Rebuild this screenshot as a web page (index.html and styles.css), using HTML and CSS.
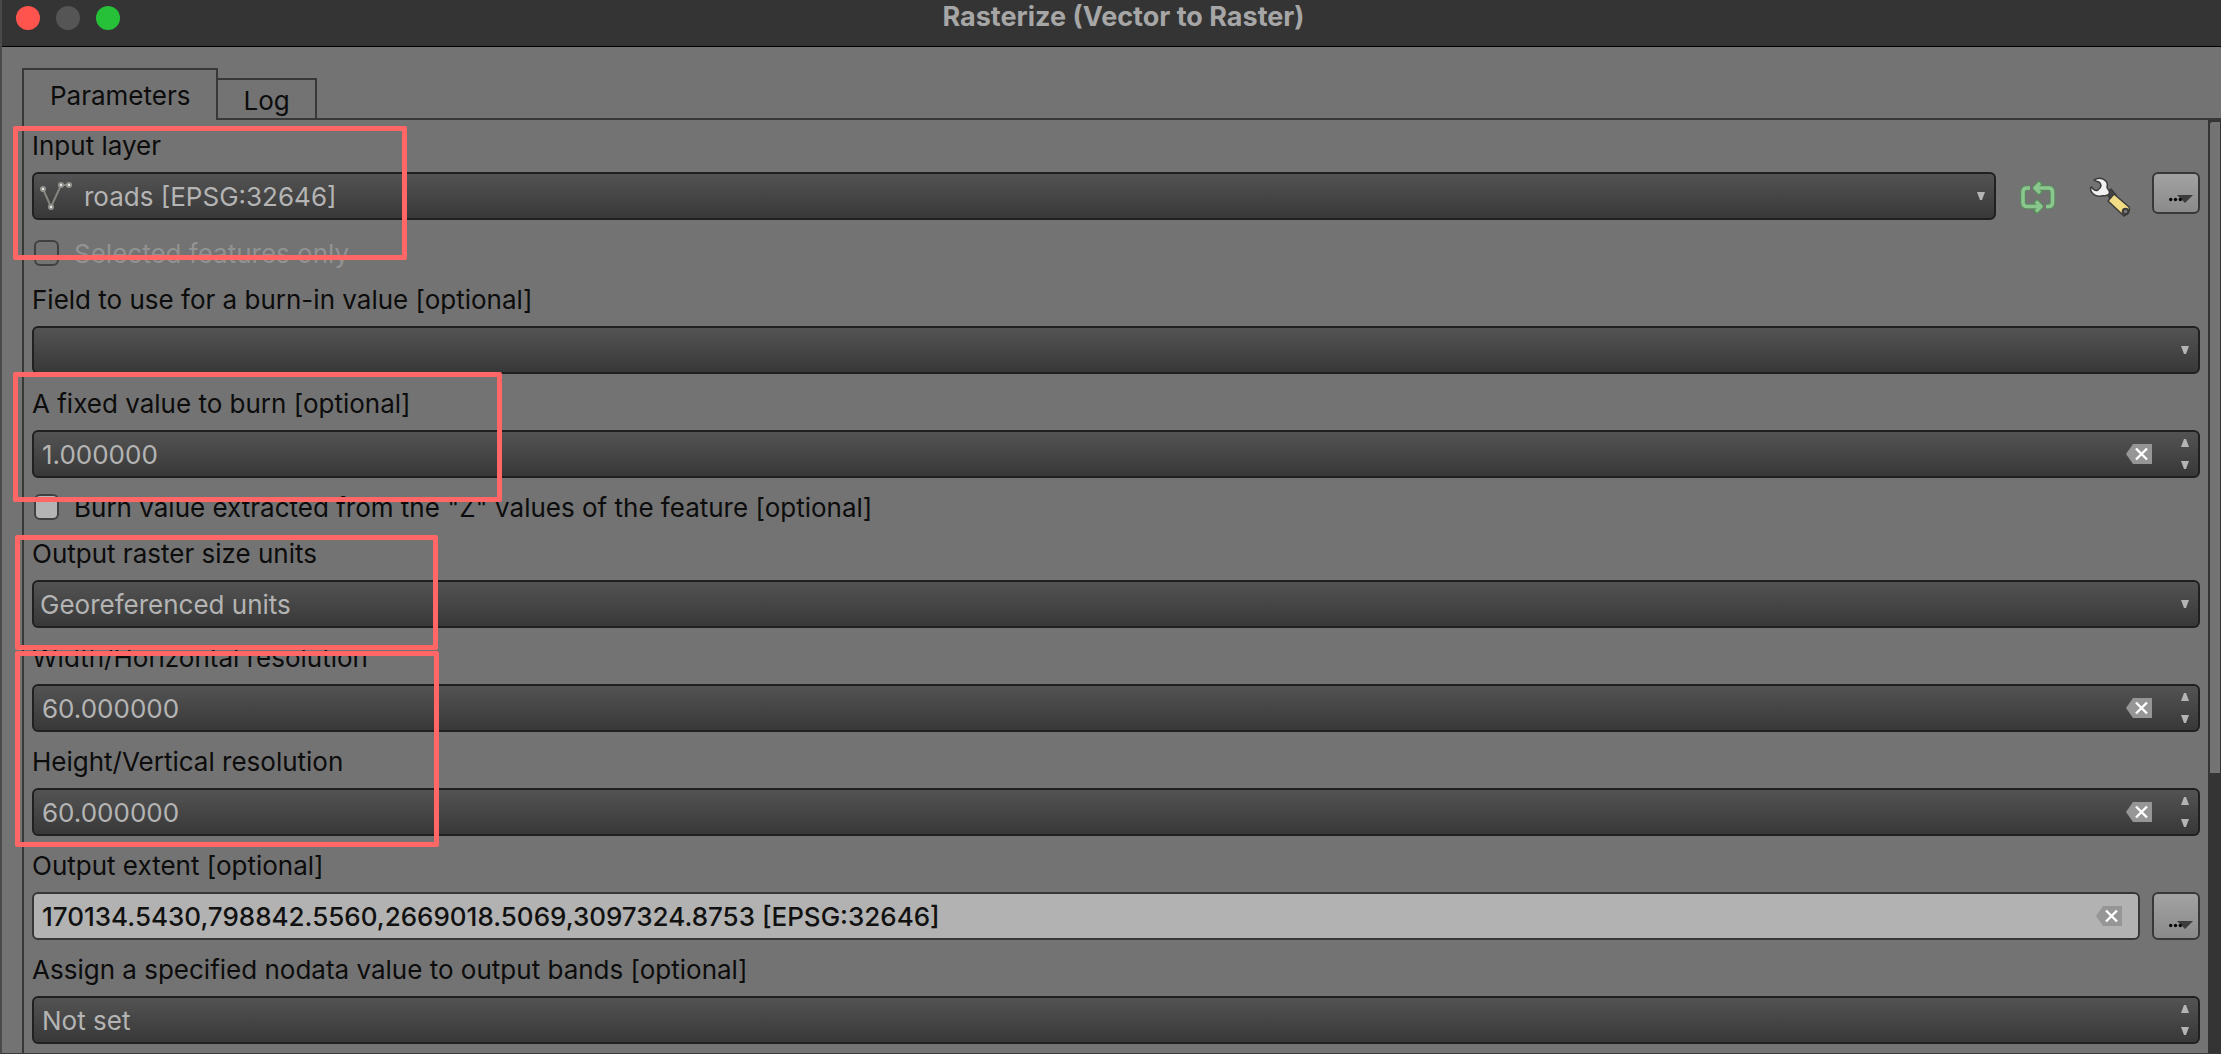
FILE: index.html
```html
<!DOCTYPE html>
<html lang="en">
<head>
<meta charset="utf-8">
<title>Rasterize (Vector to Raster)</title>
<link rel="stylesheet" href="styles.css">
</head>
<body>
<svg class="symbols" aria-hidden="true">
  <symbol id="up" viewBox="0 0 8 8"><path d="M3 0h2l3 8H0z" fill="#b4b4b4"/></symbol>
  <symbol id="down" viewBox="0 0 8 8"><path d="M0 0h8L5 8H3z" fill="#b4b4b4"/></symbol>
  <symbol id="clear" viewBox="0 0 26 20"><path d="M7 0h19v20H7L0 10z" fill="#969696"/><path d="M10 4.500l11 11M21 4.500l-11 11" stroke="#fff" stroke-width="2.400" fill="none"/></symbol>
  <symbol id="more" viewBox="0 0 24 10"><path d="M8 1h16l-8 8z" fill="#3c3c3c"/><circle cx="1.700" cy="5.500" r="1.700" fill="#080808"/><circle cx="6.500" cy="5.500" r="1.700" fill="#080808"/><circle cx="11.300" cy="5.500" r="1.700" fill="#080808"/></symbol>
</svg>
<main class="dialog">
  <header class="titlebar">
    <div class="lights">
      <button class="light close" aria-label="Close"></button>
      <button class="light minimize" aria-label="Minimize" disabled></button>
      <button class="light expand" aria-label="Zoom"></button>
    </div>
    <h1 class="title">Rasterize (Vector to Raster)</h1>
  </header>
  <div class="content">
    <div class="tabs" role="tablist">
      <button class="tab active" role="tab" aria-selected="true">Parameters</button>
      <button class="tab" role="tab" aria-selected="false">Log</button>
    </div>
    <div class="pane" role="tabpanel">
      <form class="form">
        <label class="label first" for="layer">Input layer</label>
        <div class="row">
          <div class="field combo">
            <svg class="layer-icon" viewBox="0 0 32 28" aria-hidden="true"><path d="M3 7l8 18L21 3h8" fill="none" stroke="#85857f" stroke-width="2"/><g fill="#fff" stroke="#94948e" stroke-width="2"><circle cx="3" cy="7" r="2"/><circle cx="11" cy="25" r="2"/><circle cx="21" cy="3" r="2"/><circle cx="29" cy="3" r="2"/></g></svg>
            <select class="control" id="layer"><option>roads [EPSG:32646]</option></select>
            <svg class="arrow"><use href="#down"/></svg>
          </div>
          <button class="tool" type="button" aria-label="Iterate over this layer">
            <svg width="40" height="36" viewBox="0 0 40 36" fill="none" stroke-linejoin="round"><path stroke="#4a9a50" stroke-opacity=".7" stroke-width="5.500" d="M12 9H9q-4 0-4 4v10.500q0 4 4 4h13M17 21.500l6 6-6 6M28 27.500h2.500q4 0 4-4V13q0-4-4-4H18M23 3l-6 6 6 6"/><path stroke="#8cc68f" stroke-width="3.500" d="M12 9H9q-4 0-4 4v10.500q0 4 4 4h13M18 22.500l5 5-5 5M28 27.500h2.500q4 0 4-4V13q0-4-4-4H18M22 4l-5 5 5 5"/></svg>
          </button>
          <button class="tool" type="button" aria-label="Advanced options">
            <svg width="42" height="40" viewBox="0 0 42 40" stroke="#3b3b3b" stroke-width="1.500" stroke-linejoin="round"><path d="M18 15l4-3 5 6-5 7z" fill="#444"/><path d="M5 3C11-1 20 3 18 10c0 3 4 3 2 7-2 3-5 1-8 2C6 20 0 15 2 10c2 1 3 5 7 3 3-2 4-4 2-7-1-2-4-1-6-3z" fill="#f1f2f0"/><path d="M25 17l15 13q2 5-5 9L19 24z" fill="#f3dc86"/><circle cx="36.500" cy="34.500" r="2.800" fill="#777" stroke-width="2"/></svg>
          </button>
          <button class="browse short" type="button" aria-label="Browse layers"><svg><use href="#more"/></svg></button>
        </div>
        <div class="check disabled"><input type="checkbox" id="selected" disabled><label for="selected">Selected features only</label></div>

        <label class="label" for="burnfield">Field to use for a burn-in value [optional]</label>
        <div class="field combo"><select class="control" id="burnfield"><option></option></select><svg class="arrow"><use href="#down"/></svg></div>

        <label class="label" for="fixed">A fixed value to burn [optional]</label>
        <div class="field">
          <input class="control" id="fixed" type="text" value="1.000000">
          <button class="clear" type="button" aria-label="Clear"><svg><use href="#clear"/></svg></button>
          <span class="steps"><button type="button" aria-label="Increase"><svg><use href="#up"/></svg></button><button type="button" aria-label="Decrease"><svg><use href="#down"/></svg></button></span>
        </div>
        <div class="check"><input type="checkbox" id="zvalues"><label for="zvalues">Burn value extracted from the "Z" values of the feature [optional]</label></div>

        <label class="label" for="units">Output raster size units</label>
        <div class="field combo"><select class="control" id="units"><option>Georeferenced units</option></select><svg class="arrow"><use href="#down"/></svg></div>

        <label class="label" for="width">Width/Horizontal resolution</label>
        <div class="field">
          <input class="control" id="width" type="text" value="60.000000">
          <button class="clear" type="button" aria-label="Clear"><svg><use href="#clear"/></svg></button>
          <span class="steps"><button type="button" aria-label="Increase"><svg><use href="#up"/></svg></button><button type="button" aria-label="Decrease"><svg><use href="#down"/></svg></button></span>
        </div>

        <label class="label" for="height">Height/Vertical resolution</label>
        <div class="field">
          <input class="control" id="height" type="text" value="60.000000">
          <button class="clear" type="button" aria-label="Clear"><svg><use href="#clear"/></svg></button>
          <span class="steps"><button type="button" aria-label="Increase"><svg><use href="#up"/></svg></button><button type="button" aria-label="Decrease"><svg><use href="#down"/></svg></button></span>
        </div>

        <label class="label" for="extent">Output extent [optional]</label>
        <div class="row">
          <div class="field light-field">
            <input class="control" id="extent" type="text" value="170134.5430,798842.5560,2669018.5069,3097324.8753 [EPSG:32646]">
            <button class="clear" type="button" aria-label="Clear"><svg><use href="#clear"/></svg></button>
          </div>
          <button class="browse" type="button" aria-label="Set extent"><svg><use href="#more"/></svg></button>
        </div>

        <label class="label" for="nodata">Assign a specified nodata value to output bands [optional]</label>
        <div class="field">
          <input class="control" id="nodata" type="text" value="Not set">
          <span class="steps"><button type="button" aria-label="Increase"><svg><use href="#up"/></svg></button><button type="button" aria-label="Decrease"><svg><use href="#down"/></svg></button></span>
        </div>
      </form>
      <div class="scrollbar"><div class="thumb"></div></div>
    </div>
  </div>
  <div class="mark mark-layer"></div>
  <div class="mark mark-value"></div>
  <div class="mark mark-units"></div>
  <div class="mark mark-resolution"></div>
</main>
</body>
</html>
```

FILE: styles.css
```css
* { box-sizing: border-box; }

body {
  margin: 0;
  background: #737373;
  color: #0c0c0c;
  font: 400 26px/32px Inter, "Liberation Sans", sans-serif;
}

button, input, select {
  margin: 0;
  padding: 0;
  border: 0;
  background: none;
  color: inherit;
  font: inherit;
}

svg { display: block; }
.symbols { position: absolute; width: 0; height: 0; }

.dialog {
  position: relative;
  display: flex;
  flex-direction: column;
  min-height: 100vh;
  border-left: 2px solid #4a4a4a;
  border-bottom: 1px solid #3a3a3a;
  overflow: hidden;
}

.titlebar {
  display: grid;
  grid-template-columns: 1fr auto 1fr;
  height: 47px;
  padding-left: 26px;
  margin-left: -2px;
  border-bottom: 1px solid #000;
  background: #343434;
}
.lights { display: flex; gap: 16px; margin-left: -10px; padding: 6px 0; }
.light { width: 24px; height: 24px; border-radius: 50%; }
.close { background: #ff544d; }
.minimize { background: #555; }
.expand { background: #26c138; }
.title {
  margin: 0;
  color: #a6a6a6;
  font-size: 27px;
  font-weight: 700;
  line-height: 34px;
}

.content {
  display: flex;
  flex: 1;
  flex-direction: column;
  padding: 21px 0 0 20px;
}
.tabs {
  display: flex;
  align-items: flex-end;
  box-shadow: inset 0 -2px #383838;
}
.tab {
  height: 42px;
  padding: 4px 25px 0;
  border: 2px solid #383838;
  border-left: 0;
}
.active {
  height: 52px;
  padding: 2px 26px 0;
  border-left: 2px solid #383838;
  border-bottom: 0;
  background: #737373;
}

.pane {
  display: flex;
  flex: 1;
  border-left: 2px solid #383838;
}
.form { flex: 1; min-width: 0; padding: 0 8px 9px; }
.label { display: block; padding: 6px 0 2px; line-height: 48px; }
.first { padding-top: 2px; }
.row { display: flex; align-items: flex-start; gap: 12px; }

.field {
  display: flex;
  flex: 1;
  align-items: center;
  min-width: 0;
  height: 48px;
  padding: 0 8px;
  border: 2px solid #202020;
  border-radius: 6px;
  background: linear-gradient(#535353, #383838);
  color: #b4b4b4;
}
.combo { padding-left: 6px; }
.combo .control { padding-top: 2px; }
.light-field {
  padding-right: 16px;
  border-color: #373737;
  background: #b2b2b2;
  color: #111;
  font-weight: 500;
}
.control {
  flex: 1;
  min-width: 0;
  height: 44px;
  appearance: none;
  outline: 0;
}
.layer-icon { width: 32px; height: 28px; margin-right: 12px; }
.arrow { width: 8px; height: 8px; margin-right: 1px; }
.clear svg { width: 26px; height: 20px; }
.steps {
  display: flex;
  flex-direction: column;
  gap: 14px;
  margin: 0 1px 0 29px;
}
.steps svg { width: 8px; height: 8px; }

.tool { display: grid; place-items: center; width: 60px; height: 50px; margin-bottom: -2px; }
.browse {
  display: flex;
  align-items: flex-end;
  justify-content: flex-end;
  width: 48px;
  height: 48px;
  padding: 0 5px 8px 0;
  border: 2px solid #383838;
  border-radius: 6px;
  background: linear-gradient(#a2a2a2, #8a8a8a);
}
.short { height: 42px; }
.browse svg { width: 24px; height: 10px; }

.check {
  display: flex;
  align-items: center;
  gap: 15px;
  height: 26px;
  margin: 16px 0 4px 2px;
}
.check label { padding-top: 2px; }
.check input {
  width: 25px;
  height: 26px;
  appearance: none;
  border: 2px solid #404040;
  border-radius: 6px;
  background: #b4b4b4;
}
.disabled { margin-top: 20px; color: #929292; }
.disabled input { background: none; }

.scrollbar {
  width: 13px;
  border-right: 1px solid #343434;
  background: #343434;
}
.thumb {
  height: 70%;
  border: 2px solid #343434;
  border-width: 2px 0 0 2px;
  border-radius: 4px 0 0;
  background: #737373;
}

/* Highlight frames drawn over the form */
.mark {
  position: absolute;
  border: 5px solid #f66;
  border-radius: 2px;
  pointer-events: none;
}
.mark-layer { left: 11px; top: 126px; width: 394px; height: 134px; }
.mark-value { left: 11px; top: 372px; width: 489px; height: 130px; }
.mark-units { left: 13px; top: 535px; width: 423px; height: 115px; }
.mark-resolution { left: 13px; top: 651px; width: 424px; height: 196px; }
```
